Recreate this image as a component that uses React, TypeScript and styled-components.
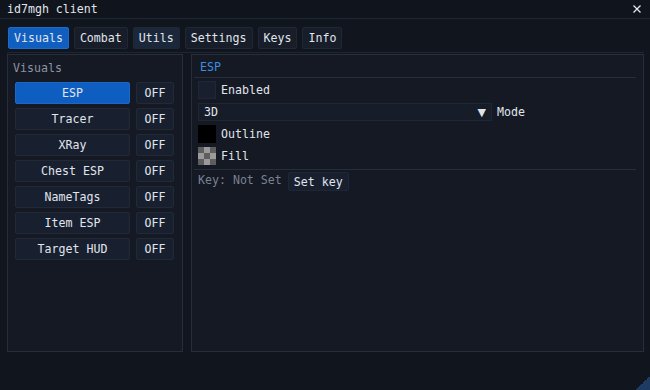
import React from 'react'
import styled, { createGlobalStyle } from 'styled-components'

const Global = createGlobalStyle`
  html, body { margin: 0; padding: 0; background: #0d1017; }
  * { box-sizing: border-box; }
`

const Window = styled.div`
  position: relative;
  width: 650px;
  height: 390px;
  background: #11151e;
  color: #e1e5ec;
  font-family: "DejaVu Sans Mono", "Liberation Mono", monospace;
  font-size: 11.6px;
  display: flex;
  flex-direction: column;
  overflow: hidden;
`

const TitleBar = styled.div`
  height: 19px;
  padding: 0 7px;
  display: flex;
  align-items: center;
  justify-content: space-between;
  background: #10141c;
  border-bottom: 1px solid #1f2633;
`

const Close = styled.svg`
  width: 8px;
  height: 8px;
  margin-right: 2px;
`

const Body = styled.div`
  flex: 1;
  padding: 8px 6px 38px 7px;
  display: flex;
  flex-direction: column;
`

const TabRow = styled.div`
  display: flex;
  gap: 5px;
  padding-left: 1px;
  padding-bottom: 3px;
  border-bottom: 1px solid #1f2633;
`

const Tab = styled.div<{ $state?: 'active' | 'hover' }>`
  height: 22px;
  padding: 0 5px;
  display: flex;
  align-items: center;
  border-radius: 2px;
  background: ${p => (p.$state === 'active' ? '#0f5ec0' : p.$state === 'hover' ? '#1b283b' : '#171d29')};
  border: 1px solid ${p => (p.$state === 'active' ? '#1d6ac8' : '#1f2735')};
`

const Panels = styled.div`
  flex: 1;
  display: flex;
  gap: 8px;
  margin-top: 1px;
`

const Panel = styled.div<{ $w?: number }>`
  ${p => (p.$w ? `width: ${p.$w}px;` : 'flex: 1;')}
  background: #141924;
  border: 1px solid #262d3b;
  display: flex;
  flex-direction: column;
`

const Label = styled.div`
  height: 21px;
  display: flex;
  align-items: center;
  padding: 4px 0 0 5px;
  color: #8c94a3;
`

const ModList = styled.div`
  display: flex;
  flex-direction: column;
  gap: 4px;
  padding: 6px 8px 0 7px;
`

const ModRow = styled.div`
  display: flex;
  gap: 6px;
`

const ModButton = styled.div<{ $on?: boolean }>`
  height: 22px;
  flex: 1;
  display: flex;
  align-items: center;
  justify-content: center;
  border-radius: 2px;
  background: ${p => (p.$on ? '#0e5ec1' : '#182030')};
  border: 1px solid ${p => (p.$on ? '#1b68c6' : '#222a38')};
`

const Toggle = styled(ModButton)`
  width: 38px;
  flex: none;
`

const Header = styled.div`
  height: 23px;
  display: flex;
  align-items: center;
  padding: 2px 0 0 6px;
  color: #3d8ee2;
  margin: 0 7px 0 2px;
  border-bottom: 1px solid #262d3b;
`

const Settings = styled.div`
  display: flex;
  flex-direction: column;
  gap: 4px;
  padding: 3px 0 0 6px;
`

const Line = styled.div`
  display: flex;
  align-items: center;
  gap: 5px;
  height: 18px;
`

const Check = styled.div`
  width: 18px;
  height: 18px;
  background: #182030;
  border: 1px solid #202838;
`

const Swatch = styled.div<{ $checker?: boolean }>`
  width: 18px;
  height: 18px;
  background: ${p =>
    p.$checker
      ? 'repeating-conic-gradient(#9a9a9a 0 25%, #5e5e5e 0 50%) 0 0 / 12px 12px'
      : '#000'};
`

const Combo = styled.div`
  width: 294px;
  height: 18px;
  background: #161c28;
  border: 1px solid #1f2735;
  display: flex;
  align-items: center;
  justify-content: space-between;
  padding: 0 5px;
`

const Arrow = styled.span`
  font-size: 11px;
  color: #dfe3ea;
  font-family: "DejaVu Sans", sans-serif;
`

const Divider = styled.div`
  height: 1px;
  background: #262d3b;
  margin: 4px 7px 2px 2px;
`

const KeyRow = styled.div`
  display: flex;
  align-items: center;
  gap: 6px;
  padding-left: 6px;
`

const Muted = styled.span`
  color: #7a8291;
  margin-top: -4px;
`

const SmallButton = styled.div`
  height: 19px;
  padding: 0 5px;
  display: flex;
  align-items: center;
  background: #182030;
  border: 1px solid #1f2735;
  border-radius: 2px;
`

const Grip = styled.div`
  position: absolute;
  right: 0;
  bottom: 0;
  width: 14px;
  height: 14px;
  background: linear-gradient(135deg, transparent 50%, #1d3b63 50%);
`

const mods = ['ESP', 'Tracer', 'XRay', 'Chest ESP', 'NameTags', 'Item ESP', 'Target HUD']

export default function App() {
  return (
    <Window>
      <Global />
      <TitleBar>
        <span>id7mgh client</span>
        <Close viewBox="0 0 8 8">
          <path d="M0.5 0.5 L7.5 7.5 M7.5 0.5 L0.5 7.5" stroke="#e8ecf2" strokeWidth="1.2" />
        </Close>
      </TitleBar>
      <Body>
        <TabRow>
          <Tab $state="active">Visuals</Tab>
          <Tab>Combat</Tab>
          <Tab $state="hover">Utils</Tab>
          <Tab>Settings</Tab>
          <Tab>Keys</Tab>
          <Tab>Info</Tab>
        </TabRow>
        <Panels>
          <Panel $w={176}>
            <Label>Visuals</Label>
            <ModList>
              {mods.map((m, i) => (
                <ModRow key={m}>
                  <ModButton $on={i === 0}>{m}</ModButton>
                  <Toggle>OFF</Toggle>
                </ModRow>
              ))}
            </ModList>
          </Panel>
          <Panel>
            <Header>ESP</Header>
            <Settings>
              <Line>
                <Check />
                <span>Enabled</span>
              </Line>
              <Line>
                <Combo>
                  <span>3D</span>
                  <Arrow>▼</Arrow>
                </Combo>
                <span>Mode</span>
              </Line>
              <Line>
                <Swatch />
                <span>Outline</span>
              </Line>
              <Line>
                <Swatch $checker />
                <span>Fill</span>
              </Line>
            </Settings>
            <Divider />
            <KeyRow>
              <Muted>Key: Not Set</Muted>
              <SmallButton>Set key</SmallButton>
            </KeyRow>
          </Panel>
        </Panels>
      </Body>
      <Grip />
    </Window>
  )
}
